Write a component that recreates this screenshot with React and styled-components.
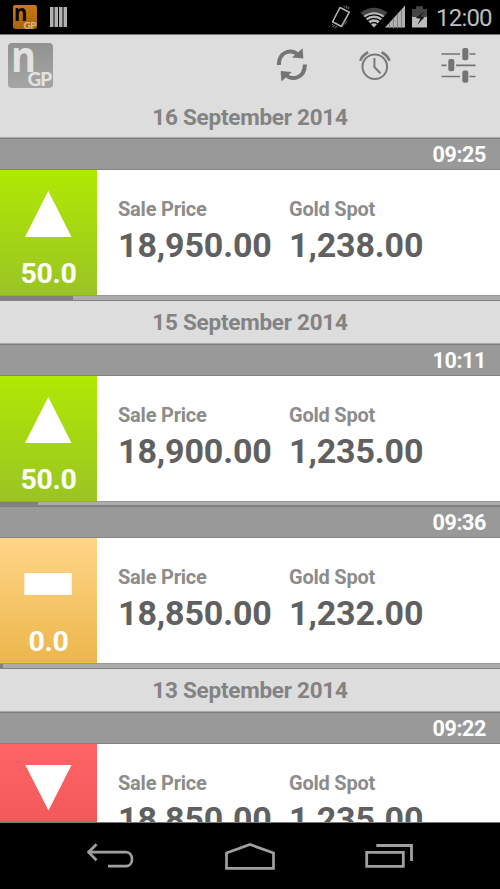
import React from "react";
import styled, { createGlobalStyle } from "styled-components";

const GlobalStyle = createGlobalStyle`
  * {
    box-sizing: border-box;
  }

  body {
    margin: 0;
    background: #000;
    font-family: Roboto, "Liberation Sans", sans-serif;
  }

  svg {
    display: block;
    flex-shrink: 0;
  }
`;

const Screen = styled.div`
  display: flex;
  flex-direction: column;
  width: 500px;
  height: 889px;
  overflow: hidden;
  background: #ddd;
`;

const StatusBar = styled.header`
  display: flex;
  align-items: center;
  flex: 0 0 35px;
  padding: 0 8px 0 13px;
  background: #000;
  border-bottom: 1px solid #777;

  .status__left,
  .status__right {
    display: flex;
    align-items: center;
  }

  .status__left {
    gap: 13px;
  }

  .status__right {
    margin-left: auto;
  }
`;

const Clock = styled.span`
  width: 56px;
  margin-left: 8px;
  padding-top: 2px;
  color: #bdbdbd;
  font-size: 24px;
  line-height: 32px;
  letter-spacing: -0.8px;
  white-space: nowrap;
`;

const ActionBar = styled.div`
  display: flex;
  align-items: center;
  flex: 0 0 60.5px;
  padding: 0 24px 0 8px;

  .actions {
    display: flex;
    align-items: center;
    margin-left: auto;
    gap: 49px;
  }

  .actions svg:first-child {
    margin-right: 1px;
  }
`;

const List = styled.main`
  flex: 1;
  min-height: 0;
  overflow: hidden;
  border-bottom: 1px solid #777;
`;

const DateHeader = styled.h2`
  height: 42.7px;
  margin: 0;
  border-bottom: 1px solid #aaa;
  color: #838383;
  font-size: 22.5px;
  font-weight: 700;
  line-height: 43px;
  letter-spacing: -0.25px;
  text-align: center;
`;

const TimeBar = styled.div`
  height: 32px;
  padding-right: 14px;
  background: #999;
  border-top: 1px solid #7d7d7d;
  border-bottom: 1px solid #838383;
  color: #fff;
  font-size: 21.5px;
  font-weight: 700;
  line-height: 32px;
  letter-spacing: -0.4px;
  text-align: right;
`;

const Row = styled.div`
  display: flex;
  height: 125px;
  background: #fff;
`;

const gradients = {
  up: "linear-gradient(#b0e903, #9ac424)",
  same: "linear-gradient(#ffd588, #ecb64b)",
  down: "linear-gradient(#ff6567, #eb5052)",
};

const Change = styled.div`
  display: flex;
  flex-direction: column;
  align-items: center;
  width: 97px;
  padding-top: 20px;
  background: ${({ $trend }) => gradients[$trend]};

  svg {
    margin-right: 2px;
  }

  span {
    margin-top: 18px;
    color: #fff;
    font-size: 28.5px;
    font-weight: 700;
    line-height: 36px;
    letter-spacing: -0.3px;
  }
`;

const Prices = styled.div`
  display: flex;
  padding: 26px 0 0 21px;
`;

const Price = styled.div`
  width: 171px;
  white-space: nowrap;

  .price__label {
    color: #8c8c8c;
    font-size: 20px;
    font-weight: 700;
    line-height: 26px;
    letter-spacing: -0.22px;
  }

  .price__value {
    margin-top: 3px;
    color: #606060;
    font-size: 34px;
    font-weight: 700;
    line-height: 40px;
    letter-spacing: -0.12px;
  }
`;

const Progress = styled.div`
  height: 5.75px;
  background: #ababab;
  border-top: 1px solid #989898;
  border-bottom: 1px solid #858585;

  div {
    height: 100%;
    background: #808080;
  }
`;

const NavBar = styled.nav`
  display: flex;
  justify-content: center;
  align-items: center;
  flex: 0 0 66px;
  gap: 90px;
  padding-left: 1px;
  background: #000;
`;

const LogoBox = styled.div`
  position: relative;
  width: ${({ $size }) => $size}px;
  height: ${({ $size }) => $size}px;
  border-radius: ${({ $size }) => $size * 0.09}px;
  background: ${({ $dark }) =>
    $dark
      ? "linear-gradient(#c87a10, #a8640b)"
      : "linear-gradient(#929292, #a5a5a5)"};
  color: ${({ $dark }) => ($dark ? "#080500" : "#e2e2e2")};
  font-family: "Open Sans", sans-serif;

  .logo__n {
    position: absolute;
    left: 6%;
    top: 7%;
    font-size: ${({ $size }) => $size * 0.96}px;
    font-weight: 700;
    line-height: ${({ $size }) => $size * 0.44}px;
    transform: scaleX(0.88);
    transform-origin: left;
  }

  .logo__gp {
    position: absolute;
    right: 4%;
    bottom: -3%;
    color: ${({ $dark }) => ($dark ? "#d2b78d" : "#e2e2e2")};
    font-family: Lato, sans-serif;
    font-size: ${({ $size }) => $size * 0.42}px;
    font-weight: 900;
    line-height: 1;
    letter-spacing: -0.05em;
  }
`;

const Logo = ({ size, dark }) => (
  <LogoBox $size={size} $dark={dark}>
    <span className="logo__n">n</span>
    <span className="logo__gp">GP</span>
  </LogoBox>
);

const BarsIcon = () => (
  <svg width="17" height="22" viewBox="0 0 17 22">
    <path d="M0 1h3.5v20H0zM4.5 1H8v20H4.5zM9 1h3.5v20H9zM13.5 1H17v20h-3.5z" fill="#b2b2b2" />
  </svg>
);

const StatusIcons = () => (
  <svg width="98" height="34" viewBox="331 0 98 34">
    <g fill="none" stroke="#b0b0b0" strokeWidth="1.6">
      <path d="M341 7.5l9.3 4.7L342.5 26.5l-9-4.7z" strokeLinejoin="round" />
      <path
        d="M344.5 6.3l5.5 2.7M347 6l3.5 1.8M333 24.2l6 3.2M333.5 26.2l3.5 1.9M344.5 24l3-5.5M346 24.5l2-3.5"
        stroke="#888"
        strokeWidth="1"
        strokeDasharray="1.5 .8"
      />
    </g>
    <path d="M361.5 12.5Q375 3 388.5 12.5L375 27.5z" fill="#444" />
    <path d="M364.8 16Q375 8.5 385.2 16L375 27.5z" fill="#bbb" />
    <g fill="none" stroke="#050505" strokeWidth="1.3">
      <path d="M366 18.1q9-6.3 18 0M368.6 20.8q6.4-4.5 12.8 0M371.6 23.8q3.4-2.4 6.8 0" />
    </g>
    <path d="M406 5.5v22h-20z" fill="#b0b0b0" />
    <path d="M390.5 23v5M394.5 18.5v10M398.5 14v14M402.5 10v18" stroke="#808080" />
    <path d="M413 9h4V6.3h7V9h4v8h-15z" fill="#444" />
    <path d="M413 17h15v10.5h-15z" fill="#bbb" />
    <path d="M425.5 11.5l-9 6.5 5 .8-3.3 6.2 7.3-7.7-4-.8z" fill="#1c1c1c" />
  </svg>
);

const RefreshIcon = () => (
  <svg width="32" height="36" viewBox="276 48 32 36">
    <g fill="none" stroke="#747474" strokeWidth="4">
      <path d="M278.8 66C279 52.5 291.5 48.5 299.5 57" />
      <path d="M304.9 65.5C304.7 79 292.2 83 284.2 74.5" />
    </g>
    <path d="M302.6 49.3l.8 10.2-11.4-1z" fill="#747474" />
    <path d="M281.4 82.5l-.8-10.5 11.2 1z" fill="#747474" />
  </svg>
);

const AlarmIcon = () => (
  <svg width="34" height="34" viewBox="358 48 34 34">
    <g fill="none" stroke="#797979" strokeWidth="2">
      <circle cx="374.8" cy="66.7" r="12.3" />
      <path d="M374.4 58v9l6 6.3" />
      <path d="M360.2 60.8q2.3-6 8-8.6M381.6 52.2q5.7 2.6 8 8.6" strokeWidth="2.6" />
    </g>
  </svg>
);

const SlidersIcon = () => (
  <svg width="35" height="36" viewBox="441 47 35 36">
    <path
      d="M441.5 54h18.5M469.5 54h6M441.5 65.3h5M456 65.3h19.5M441.5 76.5h18.5M469.5 76.5h6"
      stroke="#747474"
      strokeWidth="1.7"
    />
    <g fill="#747474">
      <rect x="462.3" y="48" width="6" height="12.3" rx="2" />
      <rect x="448.3" y="59" width="6" height="12.3" rx="2" />
      <rect x="462.3" y="70.5" width="6" height="12.3" rx="2" />
    </g>
  </svg>
);

const shapes = {
  up: "M24.3 1L47.5 47H1z",
  same: "M.3 15h47.5v22H.3z",
  down: "M1.3 1h46.2l-23 45.5z",
};

const TrendIcon = ({ trend }) => (
  <svg width="48" height="48" viewBox="0 0 48 48">
    <path d={shapes[trend]} fill="#fff" />
  </svg>
);

const BackIcon = () => (
  <svg width="47" height="26" viewBox="88 845 47 26">
    <g fill="none" stroke="#a0a0a0" strokeWidth="2.7">
      <path d="M90 854.2h37c8 0 8 14 0 14h-18" />
      <path d="M97.5 846.2l-8 8 8 8" />
    </g>
  </svg>
);

const HomeIcon = () => (
  <svg width="51" height="30" viewBox="224 841 51 30">
    <path d="M226.5 853l23.5-8.5 23.5 8.5v15.3h-47z" fill="none" stroke="#a0a0a0" strokeWidth="2.7" />
  </svg>
);

const RecentIcon = () => (
  <svg width="49" height="26" viewBox="366 845 49 26">
    <g fill="none" stroke="#a0a0a0" strokeWidth="2.8">
      <path d="M367.7 854.3h36.6v14h-36.6z" />
      <path d="M377.3 847.5h35.2V863" />
    </g>
  </svg>
);

const days = [
  {
    date: "16 September 2014",
    entries: [
      { time: "09:25", trend: "up", change: "50.0", sale: "18,950.00", spot: "1,238.00", progress: 73 },
    ],
  },
  {
    date: "15 September 2014",
    entries: [
      { time: "10:11", trend: "up", change: "50.0", sale: "18,900.00", spot: "1,235.00", progress: 38 },
      { time: "09:36", trend: "same", change: "0.0", sale: "18,850.00", spot: "1,232.00", progress: 3 },
    ],
  },
  {
    date: "13 September 2014",
    entries: [
      { time: "09:22", trend: "down", sale: "18,850.00", spot: "1,235.00", progress: 0 },
    ],
  },
];

const Entry = ({ entry }) => (
  <>
    <TimeBar>{entry.time}</TimeBar>
    <Row>
      <Change $trend={entry.trend}>
        <TrendIcon trend={entry.trend} />
        {entry.change && <span>{entry.change}</span>}
      </Change>
      <Prices>
        <Price>
          <div className="price__label">Sale Price</div>
          <div className="price__value">{entry.sale}</div>
        </Price>
        <Price>
          <div className="price__label">Gold Spot</div>
          <div className="price__value">{entry.spot}</div>
        </Price>
      </Prices>
    </Row>
    <Progress>
      <div style={{ width: entry.progress }} />
    </Progress>
  </>
);

const App = () => {
  return (
    <>
      <GlobalStyle />
      <Screen>
        <StatusBar>
          <div className="status__left">
            <Logo size={24} dark />
            <BarsIcon />
          </div>
          <div className="status__right">
            <StatusIcons />
            <Clock>12:00</Clock>
          </div>
        </StatusBar>

        <ActionBar>
          <Logo size={45} />
          <div className="actions">
            <RefreshIcon />
            <AlarmIcon />
            <SlidersIcon />
          </div>
        </ActionBar>

        <List>
          {days.map((day) => (
            <section key={day.date}>
              <DateHeader>{day.date}</DateHeader>
              {day.entries.map((entry) => (
                <Entry key={entry.time} entry={entry} />
              ))}
            </section>
          ))}
        </List>

        <NavBar>
          <BackIcon />
          <HomeIcon />
          <RecentIcon />
        </NavBar>
      </Screen>
    </>
  );
};

export default App;
